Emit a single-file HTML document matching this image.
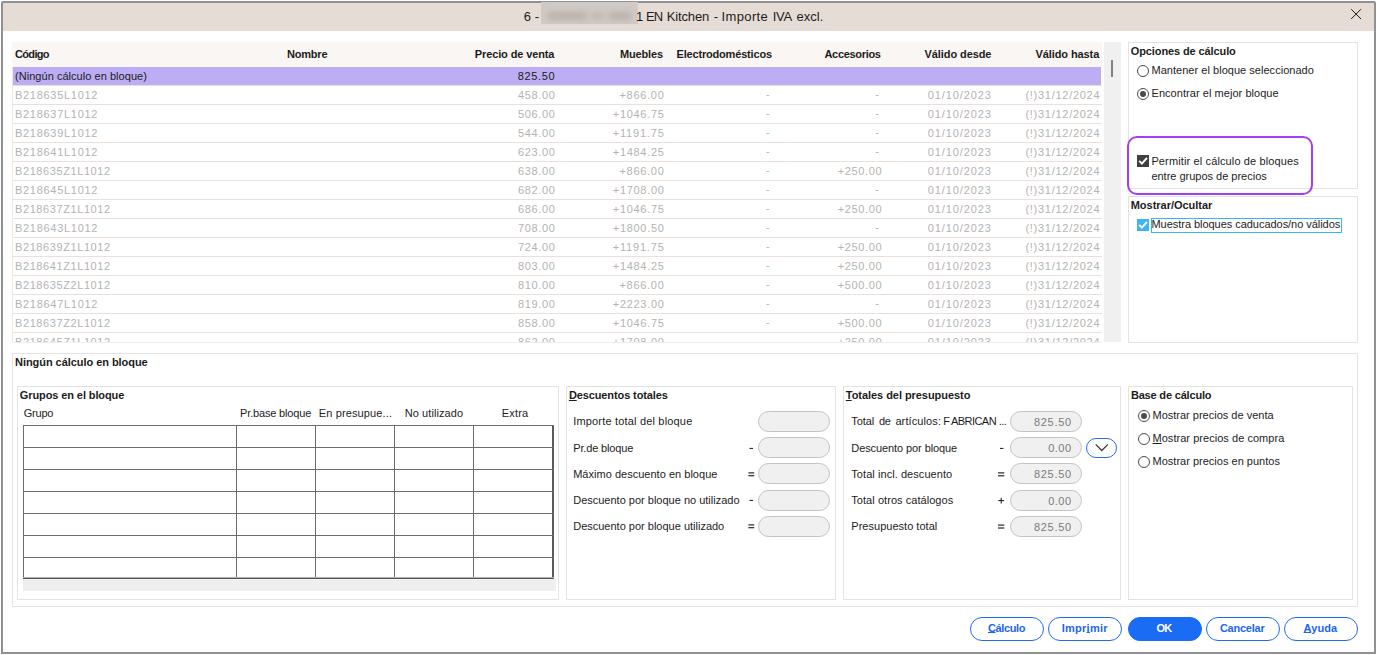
<!DOCTYPE html>
<html lang="es"><head><meta charset="utf-8"><title>Importe IVA excl.</title>
<style>
html,body{margin:0;padding:0;background:#fff;}
body{width:1377px;height:655px;overflow:hidden;position:relative;font-family:"Liberation Sans",sans-serif;color:#1c1c1c;}
#win{position:absolute;left:0;top:0;width:1377px;height:655px;overflow:hidden;}
#frame{position:absolute;left:1px;top:1px;width:1371px;height:649px;border:2px solid #909090;border-radius:2px 2px 0 0;}
.a{position:absolute;}
.t{position:absolute;white-space:pre;line-height:20px;height:20px;font-size:11px;}
.t u{text-decoration:underline;text-underline-offset:1px;text-decoration-thickness:1px;}
.t u.b{text-underline-offset:0px;}
#clip{position:absolute;left:0;top:0;width:1102px;height:342px;overflow:hidden;}
.hl{position:absolute;left:13px;width:1089px;height:1px;background:#ebe0d9;}
.pn{position:absolute;border:1px solid #e3e3e3;box-sizing:border-box;}
.pill{position:absolute;width:72px;height:21px;box-sizing:border-box;border:1px solid #c3c3c3;border-radius:11px;background:#f0f0f0;}
.rad{position:absolute;width:12px;height:12px;box-sizing:border-box;border:1px solid #4a4a4a;border-radius:50%;background:#fff;}
.rad.on::after{content:"";position:absolute;left:2px;top:2px;width:6px;height:6px;border-radius:50%;background:#4a4a4a;}
.btn{position:absolute;top:617px;width:74px;height:24px;box-sizing:border-box;border:1px solid #1f6bf0;border-radius:12px;background:#fff;}
.btn.pri{background:#1a6cf5;border-color:#1a6cf5;}
.gv{position:absolute;top:425px;width:1px;height:154px;background:#6b6b6b;}
.gh{position:absolute;left:23px;height:1px;width:531px;background:#6b6b6b;}

</style></head>
<body>
<div id="win">
<div id="frame"></div>
<div class="a" style="left:3px;top:3px;width:1371px;height:28px;background:#e6dcd6;"></div>
<div class="a" style="left:541px;top:2px;width:97px;height:22px;background:#d1cac5;overflow:hidden;">
<div class="a" style="left:7px;top:10px;width:38px;height:8px;background:#b9b1ac;filter:blur(3px);"></div>
<div class="a" style="left:50px;top:10px;width:12px;height:8px;background:#bfb7b2;filter:blur(3px);"></div>
<div class="a" style="left:68px;top:10px;width:22px;height:8px;background:#b9b1ac;filter:blur(3px);"></div>
</div>
<svg class="a" style="left:1350px;top:8px" width="12" height="12" viewBox="0 0 12 12"><path d="M1.2 1.2 L11 11 M11 1.2 L1.2 11" stroke="#1a1020" stroke-width="1" fill="none"/></svg>
<!-- table -->
<div class="a" style="left:12px;top:42px;width:1090px;height:25px;background:#faf6f3;"></div>
<div class="a" style="left:13px;top:67px;width:1088px;height:18px;background:#bdadf5;"></div>
<div class="a" style="left:12px;top:67px;width:1px;height:275px;background:#ece7e4;"></div>
<div class="hl" style="top:85px"></div><div class="hl" style="top:104px"></div><div class="hl" style="top:123px"></div><div class="hl" style="top:142px"></div><div class="hl" style="top:161px"></div><div class="hl" style="top:180px"></div><div class="hl" style="top:199px"></div><div class="hl" style="top:218px"></div><div class="hl" style="top:237px"></div><div class="hl" style="top:256px"></div><div class="hl" style="top:275px"></div><div class="hl" style="top:294px"></div><div class="hl" style="top:313px"></div><div class="hl" style="top:332px"></div>
<div class="hl" style="top:342px;background:#ededed"></div>
<div class="a" style="left:1104px;top:42px;width:17px;height:300px;background:#f0f0f0;"></div>
<div class="a" style="left:1111px;top:60px;width:2px;height:17px;background:#828282;"></div>
<!-- right panels -->
<div class="pn" style="left:1128px;top:42px;width:230px;height:147px;"></div>
<div class="a" style="left:1127.3px;top:136.4px;width:185.6px;height:58.2px;box-sizing:border-box;border:2.1px solid #a53df2;border-radius:10px;"></div>
<div class="pn" style="left:1128px;top:196px;width:230px;height:147px;"></div>
<div class="rad" style="left:1137px;top:65px"></div>
<div class="rad on" style="left:1137px;top:88px"></div>
<svg class="a" style="left:1137px;top:155px" width="12" height="12" viewBox="0 0 12 12"><rect width="12" height="12" fill="#404040"/><path d="M2.2 5.9 L4.9 8.7 L10 2.9" stroke="#fff" stroke-width="1.9" fill="none"/></svg>
<svg class="a" style="left:1137px;top:219px" width="12" height="12" viewBox="0 0 12 12"><rect width="12" height="12" fill="#3db4f5"/><path d="M2.2 5.9 L4.9 8.7 L10 2.9" stroke="#fff" stroke-width="1.9" fill="none"/></svg>
<div class="a" style="left:1151px;top:218px;width:191px;height:15px;box-sizing:border-box;border:1px solid #35b6f5;"></div>
<!-- lower panels -->
<div class="pn" style="left:12px;top:353px;width:1346px;height:254px;"></div>
<div class="pn" style="left:17px;top:386px;width:542px;height:214px;"></div>
<div class="pn" style="left:566px;top:386px;width:270px;height:214px;"></div>
<div class="pn" style="left:843px;top:386px;width:278px;height:214px;"></div>
<div class="pn" style="left:1128px;top:386px;width:225px;height:214px;"></div>
<!-- grid -->
<div class="a" style="left:23px;top:579px;width:533px;height:12px;background:#efefef;"></div>
<div class="gv" style="left:23px"></div><div class="gv" style="left:236px"></div><div class="gv" style="left:315px"></div><div class="gv" style="left:394px"></div><div class="gv" style="left:473px"></div><div class="gv" style="left:552px;width:2px;background:#5c5c5c"></div>
<div class="gh" style="top:425px"></div><div class="gh" style="top:447px"></div><div class="gh" style="top:469px"></div><div class="gh" style="top:491px"></div><div class="gh" style="top:513px"></div><div class="gh" style="top:535px"></div><div class="gh" style="top:557px"></div><div class="gh" style="top:577px;background:#b0b0b0"></div><div class="gh" style="top:578px;background:#585858"></div>
<!-- pills -->
<div class="pill" style="left:758px;top:411px"></div><div class="pill" style="left:758px;top:437px"></div><div class="pill" style="left:758px;top:463px"></div><div class="pill" style="left:758px;top:490px"></div><div class="pill" style="left:758px;top:516px"></div>
<div class="pill" style="left:1010px;top:411px"></div><div class="pill" style="left:1010px;top:437px"></div><div class="pill" style="left:1010px;top:463px"></div><div class="pill" style="left:1010px;top:490px"></div><div class="pill" style="left:1010px;top:516px"></div>
<div class="a" style="left:1086px;top:438px;width:31px;height:20px;box-sizing:border-box;border:1.3px solid #1f6cf5;border-radius:10px;background:#fff;"></div>
<svg class="a" style="left:1094px;top:443px" width="16" height="9" viewBox="0 0 16 9"><path d="M1.7 1.4 L7.8 7.5 L13.9 1.4" stroke="#383838" stroke-width="1.25" fill="none"/></svg>
<div class="rad on" style="left:1138px;top:410px"></div>
<div class="rad" style="left:1138px;top:433px"></div>
<div class="rad" style="left:1138px;top:456px"></div>
<!-- buttons -->
<div class="btn" style="left:970px"></div><div class="btn" style="left:1048px"></div><div class="btn pri" style="left:1128px"></div><div class="btn" style="left:1206px"></div><div class="btn" style="left:1284px"></div>
<!-- ops -->
<svg class="a" style="left:0;top:0" width="1377" height="655" viewBox="0 0 1377 655" fill="none" stroke="#1c1c1c"><path d="M749.5 448.4 H753" stroke-width="1.05"/><path d="M748.4 472.9 H754.2" stroke-width="1.15"/><path d="M748.4 475.7 H754.2" stroke-width="1.15"/><path d="M749.5 500.4 H753" stroke-width="1.05"/><path d="M748.4 524.9 H754.2" stroke-width="1.15"/><path d="M748.4 527.7 H754.2" stroke-width="1.15"/><path d="M1000 448.4 H1003.4" stroke-width="1.05"/><path d="M998 472.9 H1004.3" stroke-width="1.15"/><path d="M998 475.8 H1004.3" stroke-width="1.15"/><path d="M998.3 500.6 H1004.1" stroke-width="1.05"/><path d="M1001.2 497.7 V503.5" stroke-width="1.05"/><path d="M998 525.1 H1004.3" stroke-width="1.15"/><path d="M998 528.0 H1004.3" stroke-width="1.15"/></svg>

<div id="clip">
<div class="t" style="left:15.0px;top:332.1px;font-size:11px;letter-spacing:0.59px;color:#b3b3b3;">B218645Z1L1012</div>
<div class="t" style="left:517.9px;top:332.1px;font-size:11px;letter-spacing:0.65px;color:#b3b3b3;">862.00</div>
<div class="t" style="left:612.8px;top:332.1px;font-size:11px;letter-spacing:0.69px;color:#b3b3b3;">+1708.00</div>
<div class="t" style="left:766.0px;top:331.1px;font-size:11px;color:#b3b3b3;">-</div>
<div class="t" style="left:837.7px;top:332.1px;font-size:11px;letter-spacing:0.65px;color:#b3b3b3;">+250.00</div>
<div class="t" style="left:927.8px;top:332.1px;font-size:11px;letter-spacing:0.88px;color:#b3b3b3;">01/10/2023</div>
<div class="t" style="left:1025.4px;top:332.1px;font-size:11px;letter-spacing:0.73px;color:#b3b3b3;">(!)31/12/2024</div>
</div>
<div class="t" style="left:523.8px;top:6.9px;font-size:13px;">6 -</div>
<div class="t" style="left:636.0px;top:6.9px;font-size:13px;">1</div>
<div class="t" style="left:646.1px;top:6.9px;font-size:13px;letter-spacing:-1.00px;">EN</div>
<div class="t" style="left:666.8px;top:6.9px;font-size:13px;letter-spacing:-0.16px;">Kitchen</div>
<div class="t" style="left:713.7px;top:6.9px;font-size:13px;">-</div>
<div class="t" style="left:721.5px;top:6.9px;font-size:13px;letter-spacing:0.37px;">Importe</div>
<div class="t" style="left:772.7px;top:6.9px;font-size:13px;letter-spacing:-0.25px;">IVA</div>
<div class="t" style="left:796.4px;top:6.9px;font-size:13px;letter-spacing:0.07px;">excl.</div>
<div class="t" style="left:15.0px;top:44.3px;font-size:11px;letter-spacing:-0.66px;font-weight:bold;">Código</div>
<div class="t" style="left:287.0px;top:44.3px;font-size:11px;letter-spacing:-0.21px;font-weight:bold;">Nombre</div>
<div class="t" style="left:474.8px;top:44.3px;font-size:11px;letter-spacing:-0.12px;font-weight:bold;">Precio de venta</div>
<div class="t" style="left:619.9px;top:44.3px;font-size:11px;letter-spacing:-0.15px;font-weight:bold;">Muebles</div>
<div class="t" style="left:676.5px;top:44.3px;font-size:11px;letter-spacing:-0.18px;font-weight:bold;">Electrodomésticos</div>
<div class="t" style="left:824.5px;top:44.3px;font-size:11px;letter-spacing:-0.32px;font-weight:bold;">Accesorios</div>
<div class="t" style="left:924.5px;top:44.3px;font-size:11px;letter-spacing:-0.08px;font-weight:bold;">Válido desde</div>
<div class="t" style="left:1035.5px;top:44.3px;font-size:11px;letter-spacing:-0.09px;font-weight:bold;">Válido hasta</div>
<div class="t" style="left:15.0px;top:66.0px;font-size:11px;letter-spacing:0.04px;">(Ningún cálculo en bloque)</div>
<div class="t" style="left:517.8px;top:66.0px;font-size:11px;letter-spacing:0.65px;">825.50</div>
<div class="t" style="left:15.0px;top:85.0px;font-size:11px;letter-spacing:0.71px;color:#b3b3b3;">B218635L1012</div>
<div class="t" style="left:517.9px;top:85.0px;font-size:11px;letter-spacing:0.65px;color:#b3b3b3;">458.00</div>
<div class="t" style="left:619.5px;top:85.0px;font-size:11px;letter-spacing:0.70px;color:#b3b3b3;">+866.00</div>
<div class="t" style="left:766.0px;top:84.0px;font-size:11px;color:#b3b3b3;">-</div>
<div class="t" style="left:875.2px;top:84.0px;font-size:11px;color:#b3b3b3;">-</div>
<div class="t" style="left:927.8px;top:85.0px;font-size:11px;letter-spacing:0.88px;color:#b3b3b3;">01/10/2023</div>
<div class="t" style="left:1025.4px;top:85.0px;font-size:11px;letter-spacing:0.73px;color:#b3b3b3;">(!)31/12/2024</div>
<div class="t" style="left:15.0px;top:104.0px;font-size:11px;letter-spacing:0.71px;color:#b3b3b3;">B218637L1012</div>
<div class="t" style="left:517.9px;top:104.0px;font-size:11px;letter-spacing:0.65px;color:#b3b3b3;">506.00</div>
<div class="t" style="left:612.8px;top:104.0px;font-size:11px;letter-spacing:0.69px;color:#b3b3b3;">+1046.75</div>
<div class="t" style="left:766.0px;top:103.0px;font-size:11px;color:#b3b3b3;">-</div>
<div class="t" style="left:875.2px;top:103.0px;font-size:11px;color:#b3b3b3;">-</div>
<div class="t" style="left:927.8px;top:104.0px;font-size:11px;letter-spacing:0.88px;color:#b3b3b3;">01/10/2023</div>
<div class="t" style="left:1025.4px;top:104.0px;font-size:11px;letter-spacing:0.73px;color:#b3b3b3;">(!)31/12/2024</div>
<div class="t" style="left:15.0px;top:123.0px;font-size:11px;letter-spacing:0.71px;color:#b3b3b3;">B218639L1012</div>
<div class="t" style="left:517.9px;top:123.0px;font-size:11px;letter-spacing:0.65px;color:#b3b3b3;">544.00</div>
<div class="t" style="left:612.8px;top:123.0px;font-size:11px;letter-spacing:0.80px;color:#b3b3b3;">+1191.75</div>
<div class="t" style="left:766.0px;top:122.0px;font-size:11px;color:#b3b3b3;">-</div>
<div class="t" style="left:875.2px;top:122.0px;font-size:11px;color:#b3b3b3;">-</div>
<div class="t" style="left:927.8px;top:123.0px;font-size:11px;letter-spacing:0.88px;color:#b3b3b3;">01/10/2023</div>
<div class="t" style="left:1025.4px;top:123.0px;font-size:11px;letter-spacing:0.73px;color:#b3b3b3;">(!)31/12/2024</div>
<div class="t" style="left:15.0px;top:142.1px;font-size:11px;letter-spacing:0.71px;color:#b3b3b3;">B218641L1012</div>
<div class="t" style="left:517.9px;top:142.1px;font-size:11px;letter-spacing:0.65px;color:#b3b3b3;">623.00</div>
<div class="t" style="left:612.8px;top:142.1px;font-size:11px;letter-spacing:0.69px;color:#b3b3b3;">+1484.25</div>
<div class="t" style="left:766.0px;top:141.1px;font-size:11px;color:#b3b3b3;">-</div>
<div class="t" style="left:875.2px;top:141.1px;font-size:11px;color:#b3b3b3;">-</div>
<div class="t" style="left:927.8px;top:142.1px;font-size:11px;letter-spacing:0.88px;color:#b3b3b3;">01/10/2023</div>
<div class="t" style="left:1025.4px;top:142.1px;font-size:11px;letter-spacing:0.73px;color:#b3b3b3;">(!)31/12/2024</div>
<div class="t" style="left:15.0px;top:161.1px;font-size:11px;letter-spacing:0.59px;color:#b3b3b3;">B218635Z1L1012</div>
<div class="t" style="left:517.9px;top:161.1px;font-size:11px;letter-spacing:0.65px;color:#b3b3b3;">638.00</div>
<div class="t" style="left:619.5px;top:161.1px;font-size:11px;letter-spacing:0.70px;color:#b3b3b3;">+866.00</div>
<div class="t" style="left:766.0px;top:160.1px;font-size:11px;color:#b3b3b3;">-</div>
<div class="t" style="left:837.7px;top:161.1px;font-size:11px;letter-spacing:0.65px;color:#b3b3b3;">+250.00</div>
<div class="t" style="left:927.8px;top:161.1px;font-size:11px;letter-spacing:0.88px;color:#b3b3b3;">01/10/2023</div>
<div class="t" style="left:1025.4px;top:161.1px;font-size:11px;letter-spacing:0.73px;color:#b3b3b3;">(!)31/12/2024</div>
<div class="t" style="left:15.0px;top:180.1px;font-size:11px;letter-spacing:0.71px;color:#b3b3b3;">B218645L1012</div>
<div class="t" style="left:517.9px;top:180.1px;font-size:11px;letter-spacing:0.65px;color:#b3b3b3;">682.00</div>
<div class="t" style="left:612.8px;top:180.1px;font-size:11px;letter-spacing:0.69px;color:#b3b3b3;">+1708.00</div>
<div class="t" style="left:766.0px;top:179.1px;font-size:11px;color:#b3b3b3;">-</div>
<div class="t" style="left:875.2px;top:179.1px;font-size:11px;color:#b3b3b3;">-</div>
<div class="t" style="left:927.8px;top:180.1px;font-size:11px;letter-spacing:0.88px;color:#b3b3b3;">01/10/2023</div>
<div class="t" style="left:1025.4px;top:180.1px;font-size:11px;letter-spacing:0.73px;color:#b3b3b3;">(!)31/12/2024</div>
<div class="t" style="left:15.0px;top:199.1px;font-size:11px;letter-spacing:0.59px;color:#b3b3b3;">B218637Z1L1012</div>
<div class="t" style="left:517.9px;top:199.1px;font-size:11px;letter-spacing:0.65px;color:#b3b3b3;">686.00</div>
<div class="t" style="left:612.8px;top:199.1px;font-size:11px;letter-spacing:0.69px;color:#b3b3b3;">+1046.75</div>
<div class="t" style="left:766.0px;top:198.1px;font-size:11px;color:#b3b3b3;">-</div>
<div class="t" style="left:837.7px;top:199.1px;font-size:11px;letter-spacing:0.65px;color:#b3b3b3;">+250.00</div>
<div class="t" style="left:927.8px;top:199.1px;font-size:11px;letter-spacing:0.88px;color:#b3b3b3;">01/10/2023</div>
<div class="t" style="left:1025.4px;top:199.1px;font-size:11px;letter-spacing:0.73px;color:#b3b3b3;">(!)31/12/2024</div>
<div class="t" style="left:15.0px;top:218.1px;font-size:11px;letter-spacing:0.71px;color:#b3b3b3;">B218643L1012</div>
<div class="t" style="left:517.9px;top:218.1px;font-size:11px;letter-spacing:0.65px;color:#b3b3b3;">708.00</div>
<div class="t" style="left:612.8px;top:218.1px;font-size:11px;letter-spacing:0.69px;color:#b3b3b3;">+1800.50</div>
<div class="t" style="left:766.0px;top:217.1px;font-size:11px;color:#b3b3b3;">-</div>
<div class="t" style="left:875.2px;top:217.1px;font-size:11px;color:#b3b3b3;">-</div>
<div class="t" style="left:927.8px;top:218.1px;font-size:11px;letter-spacing:0.88px;color:#b3b3b3;">01/10/2023</div>
<div class="t" style="left:1025.4px;top:218.1px;font-size:11px;letter-spacing:0.73px;color:#b3b3b3;">(!)31/12/2024</div>
<div class="t" style="left:15.0px;top:237.1px;font-size:11px;letter-spacing:0.59px;color:#b3b3b3;">B218639Z1L1012</div>
<div class="t" style="left:517.9px;top:237.1px;font-size:11px;letter-spacing:0.65px;color:#b3b3b3;">724.00</div>
<div class="t" style="left:612.8px;top:237.1px;font-size:11px;letter-spacing:0.80px;color:#b3b3b3;">+1191.75</div>
<div class="t" style="left:766.0px;top:236.1px;font-size:11px;color:#b3b3b3;">-</div>
<div class="t" style="left:837.7px;top:237.1px;font-size:11px;letter-spacing:0.65px;color:#b3b3b3;">+250.00</div>
<div class="t" style="left:927.8px;top:237.1px;font-size:11px;letter-spacing:0.88px;color:#b3b3b3;">01/10/2023</div>
<div class="t" style="left:1025.4px;top:237.1px;font-size:11px;letter-spacing:0.73px;color:#b3b3b3;">(!)31/12/2024</div>
<div class="t" style="left:15.0px;top:256.1px;font-size:11px;letter-spacing:0.59px;color:#b3b3b3;">B218641Z1L1012</div>
<div class="t" style="left:517.9px;top:256.1px;font-size:11px;letter-spacing:0.65px;color:#b3b3b3;">803.00</div>
<div class="t" style="left:612.8px;top:256.1px;font-size:11px;letter-spacing:0.69px;color:#b3b3b3;">+1484.25</div>
<div class="t" style="left:766.0px;top:255.1px;font-size:11px;color:#b3b3b3;">-</div>
<div class="t" style="left:837.7px;top:256.1px;font-size:11px;letter-spacing:0.65px;color:#b3b3b3;">+250.00</div>
<div class="t" style="left:927.8px;top:256.1px;font-size:11px;letter-spacing:0.88px;color:#b3b3b3;">01/10/2023</div>
<div class="t" style="left:1025.4px;top:256.1px;font-size:11px;letter-spacing:0.73px;color:#b3b3b3;">(!)31/12/2024</div>
<div class="t" style="left:15.0px;top:275.1px;font-size:11px;letter-spacing:0.59px;color:#b3b3b3;">B218635Z2L1012</div>
<div class="t" style="left:517.9px;top:275.1px;font-size:11px;letter-spacing:0.65px;color:#b3b3b3;">810.00</div>
<div class="t" style="left:619.5px;top:275.1px;font-size:11px;letter-spacing:0.70px;color:#b3b3b3;">+866.00</div>
<div class="t" style="left:766.0px;top:274.1px;font-size:11px;color:#b3b3b3;">-</div>
<div class="t" style="left:837.7px;top:275.1px;font-size:11px;letter-spacing:0.65px;color:#b3b3b3;">+500.00</div>
<div class="t" style="left:927.8px;top:275.1px;font-size:11px;letter-spacing:0.88px;color:#b3b3b3;">01/10/2023</div>
<div class="t" style="left:1025.4px;top:275.1px;font-size:11px;letter-spacing:0.73px;color:#b3b3b3;">(!)31/12/2024</div>
<div class="t" style="left:15.0px;top:294.1px;font-size:11px;letter-spacing:0.71px;color:#b3b3b3;">B218647L1012</div>
<div class="t" style="left:517.9px;top:294.1px;font-size:11px;letter-spacing:0.65px;color:#b3b3b3;">819.00</div>
<div class="t" style="left:612.8px;top:294.1px;font-size:11px;letter-spacing:0.69px;color:#b3b3b3;">+2223.00</div>
<div class="t" style="left:766.0px;top:293.1px;font-size:11px;color:#b3b3b3;">-</div>
<div class="t" style="left:875.2px;top:293.1px;font-size:11px;color:#b3b3b3;">-</div>
<div class="t" style="left:927.8px;top:294.1px;font-size:11px;letter-spacing:0.88px;color:#b3b3b3;">01/10/2023</div>
<div class="t" style="left:1025.4px;top:294.1px;font-size:11px;letter-spacing:0.73px;color:#b3b3b3;">(!)31/12/2024</div>
<div class="t" style="left:15.0px;top:313.1px;font-size:11px;letter-spacing:0.59px;color:#b3b3b3;">B218637Z2L1012</div>
<div class="t" style="left:517.9px;top:313.1px;font-size:11px;letter-spacing:0.65px;color:#b3b3b3;">858.00</div>
<div class="t" style="left:612.8px;top:313.1px;font-size:11px;letter-spacing:0.69px;color:#b3b3b3;">+1046.75</div>
<div class="t" style="left:766.0px;top:312.1px;font-size:11px;color:#b3b3b3;">-</div>
<div class="t" style="left:837.7px;top:313.1px;font-size:11px;letter-spacing:0.65px;color:#b3b3b3;">+500.00</div>
<div class="t" style="left:927.8px;top:313.1px;font-size:11px;letter-spacing:0.88px;color:#b3b3b3;">01/10/2023</div>
<div class="t" style="left:1025.4px;top:313.1px;font-size:11px;letter-spacing:0.73px;color:#b3b3b3;">(!)31/12/2024</div>
<div class="t" style="left:1130.8px;top:41.0px;font-size:11px;letter-spacing:-0.11px;font-weight:bold;">Opciones de cálculo</div>
<div class="t" style="left:1151.5px;top:59.5px;font-size:11px;letter-spacing:0.03px;">Mantener el bloque seleccionado</div>
<div class="t" style="left:1151.5px;top:82.5px;font-size:11px;letter-spacing:0.05px;">Encontrar el mejor bloque</div>
<div class="t" style="left:1151.4px;top:151.4px;font-size:11px;letter-spacing:0.13px;">Permitir el cálculo de bloques</div>
<div class="t" style="left:1151.4px;top:165.7px;font-size:11px;letter-spacing:-0.01px;">entre grupos de precios</div>
<div class="t" style="left:1130.7px;top:194.6px;font-size:11px;letter-spacing:-0.02px;font-weight:bold;">Mostrar/Ocultar</div>
<div class="t" style="left:1151.5px;top:213.9px;font-size:11px;letter-spacing:-0.04px;">Muestra bloques caducados/no válidos</div>
<div class="t" style="left:15.0px;top:351.7px;font-size:11px;letter-spacing:-0.05px;font-weight:bold;">Ningún cálculo en bloque</div>
<div class="t" style="left:19.8px;top:385.1px;font-size:11px;letter-spacing:-0.10px;font-weight:bold;">Grupos en el bloque</div>
<div class="t" style="left:23.8px;top:402.6px;font-size:11px;letter-spacing:-0.24px;">Grupo</div>
<div class="t" style="left:240.1px;top:402.6px;font-size:11px;letter-spacing:-0.17px;">Pr.base bloque</div>
<div class="t" style="left:318.8px;top:402.6px;font-size:11px;letter-spacing:0.13px;">En presupue...</div>
<div class="t" style="left:404.7px;top:402.6px;font-size:11px;letter-spacing:0.09px;">No utilizado</div>
<div class="t" style="left:501.8px;top:402.6px;font-size:11px;letter-spacing:0.18px;">Extra</div>
<div class="t" style="left:568.9px;top:384.7px;font-size:11px;letter-spacing:-0.11px;font-weight:bold;"><u>D</u>escuentos totales</div>
<div class="t" style="left:573.2px;top:411.4px;font-size:11px;letter-spacing:0.18px;">Importe total del bloque</div>
<div class="t" style="left:573.2px;top:438.1px;font-size:11px;letter-spacing:-0.14px;">Pr.de bloque</div>
<div class="t" style="left:573.2px;top:463.9px;font-size:11px;letter-spacing:0.02px;">Máximo descuento en bloque</div>
<div class="t" style="left:573.2px;top:490.4px;font-size:11px;">Descuento por bloque no utilizado</div>
<div class="t" style="left:573.2px;top:516.1px;font-size:11px;">Descuento por bloque utilizado</div>
<div class="t" style="left:845.8px;top:384.7px;font-size:11px;letter-spacing:-0.05px;font-weight:bold;"><u>T</u>otales del presupuesto</div>
<div class="t" style="left:851.3px;top:411.4px;font-size:11px;letter-spacing:-0.11px;">Total</div>
<div class="t" style="left:879.1px;top:411.4px;font-size:11px;letter-spacing:-0.55px;">de</div>
<div class="t" style="left:895.4px;top:411.4px;font-size:11px;letter-spacing:0.11px;">artículos:</div>
<div class="t" style="left:943.3px;top:411.4px;font-size:11px;">F</div>
<div class="t" style="left:950.9px;top:411.4px;font-size:11px;letter-spacing:-0.53px;">ABRICAN</div>
<div class="t" style="left:998.8px;top:411.4px;font-size:11px;letter-spacing:-0.64px;">...</div>
<div class="t" style="left:851.3px;top:438.1px;font-size:11px;letter-spacing:-0.09px;">Descuento por bloque</div>
<div class="t" style="left:851.3px;top:463.9px;font-size:11px;letter-spacing:0.06px;">Total incl. descuento</div>
<div class="t" style="left:851.3px;top:490.4px;font-size:11px;letter-spacing:0.05px;">Total otros catálogos</div>
<div class="t" style="left:851.3px;top:516.1px;font-size:11px;letter-spacing:0.02px;">Presupuesto total</div>
<div class="t" style="left:1034.0px;top:412.0px;font-size:11px;letter-spacing:0.69px;color:#7a7a7e;">825.50</div>
<div class="t" style="left:1048.2px;top:438.0px;font-size:11px;letter-spacing:0.49px;color:#7a7a7e;">0.00</div>
<div class="t" style="left:1034.0px;top:464.0px;font-size:11px;letter-spacing:0.69px;color:#7a7a7e;">825.50</div>
<div class="t" style="left:1048.2px;top:491.0px;font-size:11px;letter-spacing:0.49px;color:#7a7a7e;">0.00</div>
<div class="t" style="left:1034.0px;top:517.0px;font-size:11px;letter-spacing:0.69px;color:#7a7a7e;">825.50</div>
<div class="t" style="left:1130.9px;top:384.7px;font-size:11px;letter-spacing:-0.18px;font-weight:bold;">Base de cálculo</div>
<div class="t" style="left:1152.5px;top:405.4px;font-size:11px;">Mostrar precios de venta</div>
<div class="t" style="left:1152.5px;top:428.2px;font-size:11px;letter-spacing:0.04px;"><u>M</u>ostrar precios de compra</div>
<div class="t" style="left:1152.5px;top:451.1px;font-size:11px;letter-spacing:0.01px;">Mostrar precios en puntos</div>
<div class="t" style="left:987.9px;top:618.2px;font-size:11px;letter-spacing:-0.36px;font-weight:bold;color:#1c66ee;"><u class="b">C</u>álculo</div>
<div class="t" style="left:1061.7px;top:618.2px;font-size:11px;letter-spacing:0.27px;font-weight:bold;color:#1c66ee;">Impr<u class="b">i</u>mir</div>
<div class="t" style="left:1156.6px;top:618.2px;font-size:11px;letter-spacing:-1.00px;font-weight:bold;color:#ffffff;">OK</div>
<div class="t" style="left:1219.9px;top:618.2px;font-size:11px;letter-spacing:-0.23px;font-weight:bold;color:#1c66ee;">Cancelar</div>
<div class="t" style="left:1303.6px;top:618.2px;font-size:11px;letter-spacing:0.07px;font-weight:bold;color:#1c66ee;"><u class="b">A</u>yuda</div>
</div>
</body></html>
